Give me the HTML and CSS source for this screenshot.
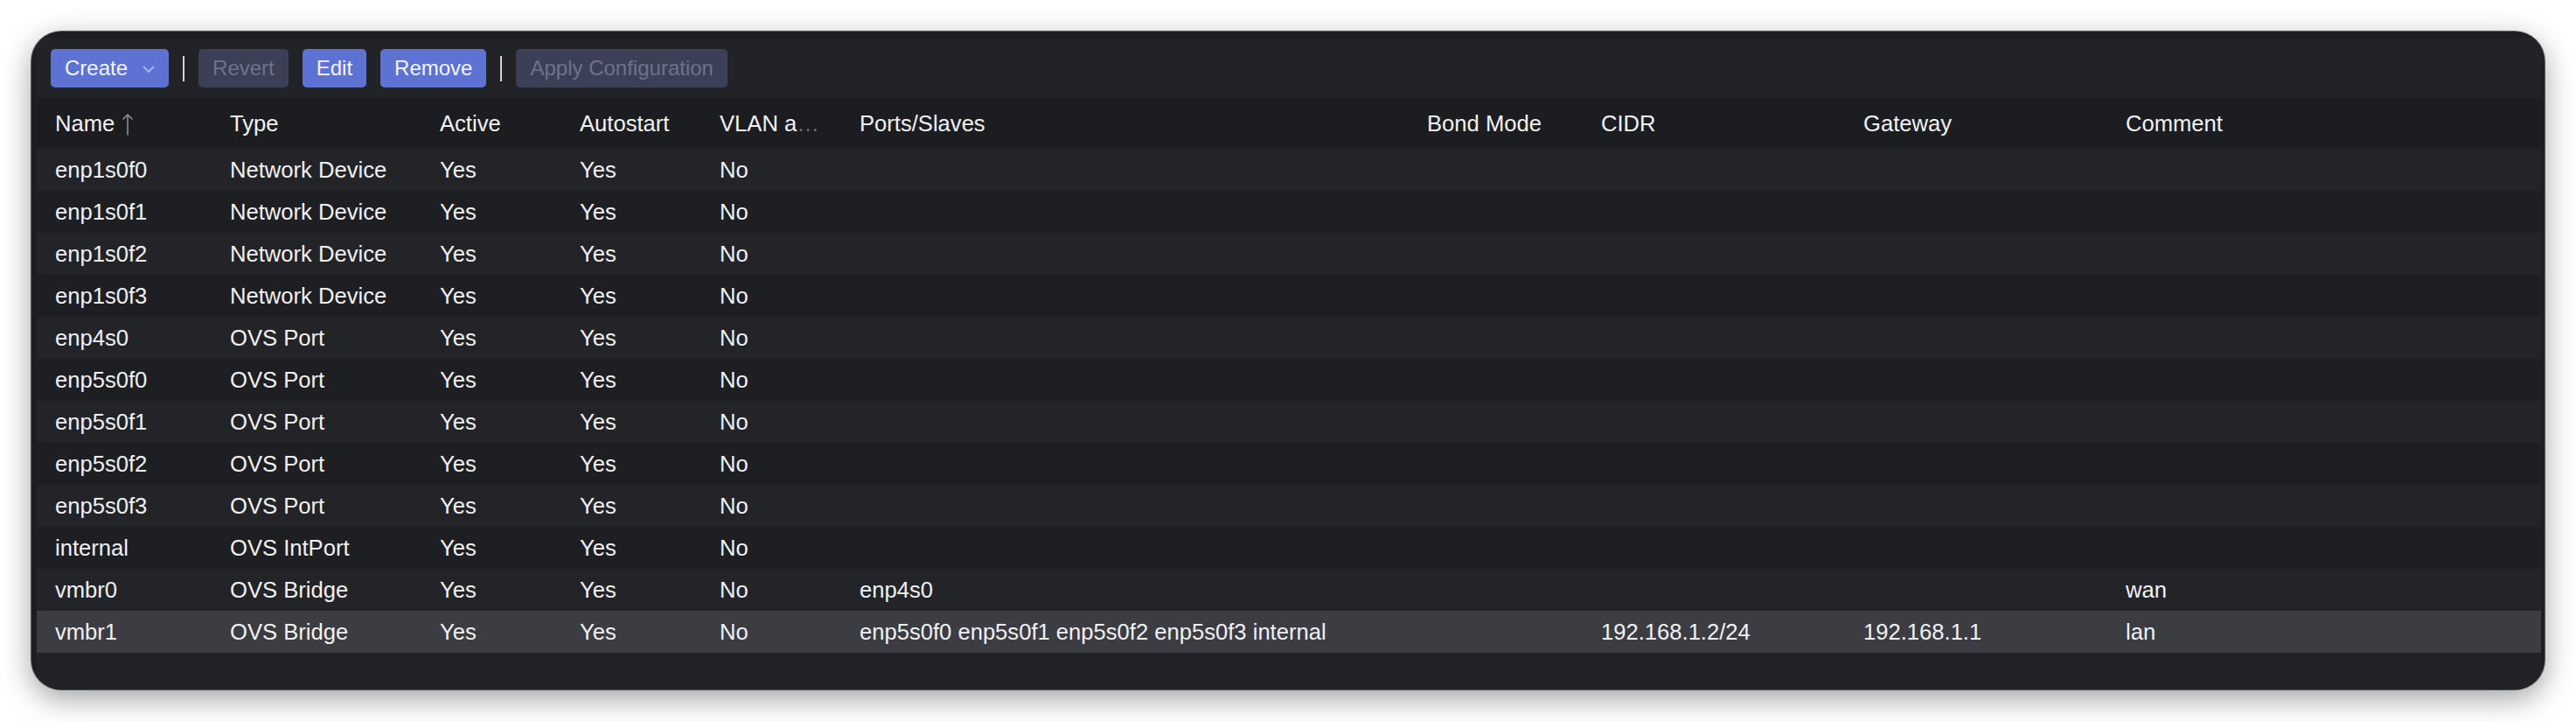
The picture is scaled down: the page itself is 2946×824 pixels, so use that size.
FILE: index.html
```html
<!DOCTYPE html>
<html>
<head>
<meta charset="utf-8">
<link rel="stylesheet" href="styles.css">
</head>
<body>
<div class="stage">
  <div class="window">
    <div class="panel">
      <div class="toolbar">
        <button class="btn btn-primary">Create <svg class="chev" width="14" height="9" viewBox="0 0 14 9"><polyline points="1.5,1.5 7,7 12.5,1.5" fill="none" stroke="currentColor" stroke-width="2" stroke-linecap="round" stroke-linejoin="round"/></svg></button>
        <span class="sep"></span>
        <button class="btn btn-disabled">Revert</button>
        <button class="btn btn-primary">Edit</button>
        <button class="btn btn-primary">Remove</button>
        <span class="sep"></span>
        <button class="btn btn-disabled">Apply Configuration</button>
      </div>
      <table class="grid">
        <colgroup>
          <col class="c-name"><col class="c-type"><col class="c-active"><col class="c-auto"><col class="c-vlan"><col class="c-ports"><col class="c-bond"><col class="c-cidr"><col class="c-gw"><col>
        </colgroup>
        <thead>
          <tr>
            <th>Name <svg class="sort" width="12" height="26" viewBox="0 0 12 26"><path d="M6 2 V25 M1 7 L6 2 L11 7" fill="none" stroke="currentColor" stroke-width="1.6" stroke-linecap="round" stroke-linejoin="round"/></svg></th>
            <th>Type</th>
            <th>Active</th>
            <th>Autostart</th>
            <th>VLAN a<span class="ell">…</span></th>
            <th>Ports/Slaves</th>
            <th>Bond Mode</th>
            <th>CIDR</th>
            <th>Gateway</th>
            <th>Comment</th>
          </tr>
        </thead>
        <tbody>
          <tr><td>enp1s0f0</td><td>Network Device</td><td>Yes</td><td>Yes</td><td>No</td><td></td><td></td><td></td><td></td><td></td></tr>
          <tr><td>enp1s0f1</td><td>Network Device</td><td>Yes</td><td>Yes</td><td>No</td><td></td><td></td><td></td><td></td><td></td></tr>
          <tr><td>enp1s0f2</td><td>Network Device</td><td>Yes</td><td>Yes</td><td>No</td><td></td><td></td><td></td><td></td><td></td></tr>
          <tr><td>enp1s0f3</td><td>Network Device</td><td>Yes</td><td>Yes</td><td>No</td><td></td><td></td><td></td><td></td><td></td></tr>
          <tr><td>enp4s0</td><td>OVS Port</td><td>Yes</td><td>Yes</td><td>No</td><td></td><td></td><td></td><td></td><td></td></tr>
          <tr><td>enp5s0f0</td><td>OVS Port</td><td>Yes</td><td>Yes</td><td>No</td><td></td><td></td><td></td><td></td><td></td></tr>
          <tr><td>enp5s0f1</td><td>OVS Port</td><td>Yes</td><td>Yes</td><td>No</td><td></td><td></td><td></td><td></td><td></td></tr>
          <tr><td>enp5s0f2</td><td>OVS Port</td><td>Yes</td><td>Yes</td><td>No</td><td></td><td></td><td></td><td></td><td></td></tr>
          <tr><td>enp5s0f3</td><td>OVS Port</td><td>Yes</td><td>Yes</td><td>No</td><td></td><td></td><td></td><td></td><td></td></tr>
          <tr><td>internal</td><td>OVS IntPort</td><td>Yes</td><td>Yes</td><td>No</td><td></td><td></td><td></td><td></td><td></td></tr>
          <tr><td>vmbr0</td><td>OVS Bridge</td><td>Yes</td><td>Yes</td><td>No</td><td>enp4s0</td><td></td><td></td><td></td><td>wan</td></tr>
          <tr class="selected"><td>vmbr1</td><td>OVS Bridge</td><td>Yes</td><td>Yes</td><td>No</td><td>enp5s0f0 enp5s0f1 enp5s0f2 enp5s0f3 internal</td><td></td><td>192.168.1.2/24</td><td>192.168.1.1</td><td>lan</td></tr>
        </tbody>
      </table>
    </div>
  </div>
</div>
</body>
</html>
```

FILE: styles.css
```css
* { box-sizing: border-box; }
html, body {
  margin: 0;
  padding: 0;
  background: #ffffff;
}
body {
  width: 2946px;
  height: 824px;
  overflow: hidden;
  font-family: "Liberation Sans", Arial, Helvetica, sans-serif;
}
.stage {
  padding: 36px;
  height: 824px;
}
.window {
  width: 2874px;
  height: 752px;
  border-radius: 34px;
  overflow: hidden;
  background: #1d1e21;
  padding: 8px 4px 0 6px;
  box-shadow: 0 10px 34px rgba(0, 0, 0, 0.38), 0 0 0 1px rgba(0, 0, 0, 0.55);
}
.panel {
  height: 100%;
  background: #222327;
  display: flex;
  flex-direction: column;
}
.toolbar {
  height: 68px;
  flex: none;
  display: flex;
  align-items: center;
  gap: 16px;
  padding-left: 16px;
}
.btn {
  height: 44px;
  border: 0;
  border-radius: 5px;
  padding: 0 16px;
  font-family: inherit;
  font-size: 24px;
  display: flex;
  align-items: center;
  gap: 17px;
  cursor: default;
}
.btn-primary {
  background: #5d72d3;
  color: #f4f5fb;
}
.btn-disabled {
  background: #3c4057;
  color: #6e7387;
}
.chev {
  color: #a9b5ec;
  margin-top: 2px;
}
.sep {
  width: 2px;
  height: 29px;
  background: #d4d4d6;
  flex: none;
}
.grid {
  width: 100%;
  table-layout: fixed;
  border-collapse: collapse;
  font-size: 25.6px;
  color: #f1f1f3;
}
.c-name { width: 200px; }
.c-type { width: 240px; }
.c-active { width: 160px; }
.c-auto { width: 160px; }
.c-vlan { width: 160px; }
.c-ports { width: 649px; }
.c-bond { width: 199px; }
.c-cidr { width: 300px; }
.c-gw { width: 300px; }
.grid th, .grid td {
  padding: 0 21px;
  text-align: left;
  font-weight: normal;
  white-space: nowrap;
  overflow: hidden;
}
.grid thead tr {
  height: 58px;
  background: #1c1d20;
}
.grid tbody tr {
  height: 48px;
}
.grid tbody tr:nth-child(odd) {
  background: #232428;
}
.grid tbody tr:nth-child(even) {
  background: #1e1f22;
}
.grid tbody tr.selected {
  background: #3c3d43;
}
.sort {
  color: #8d8e93;
  vertical-align: -5px;
  margin-left: 2px;
}
.ell {
  color: #6d6e74;
}
```
